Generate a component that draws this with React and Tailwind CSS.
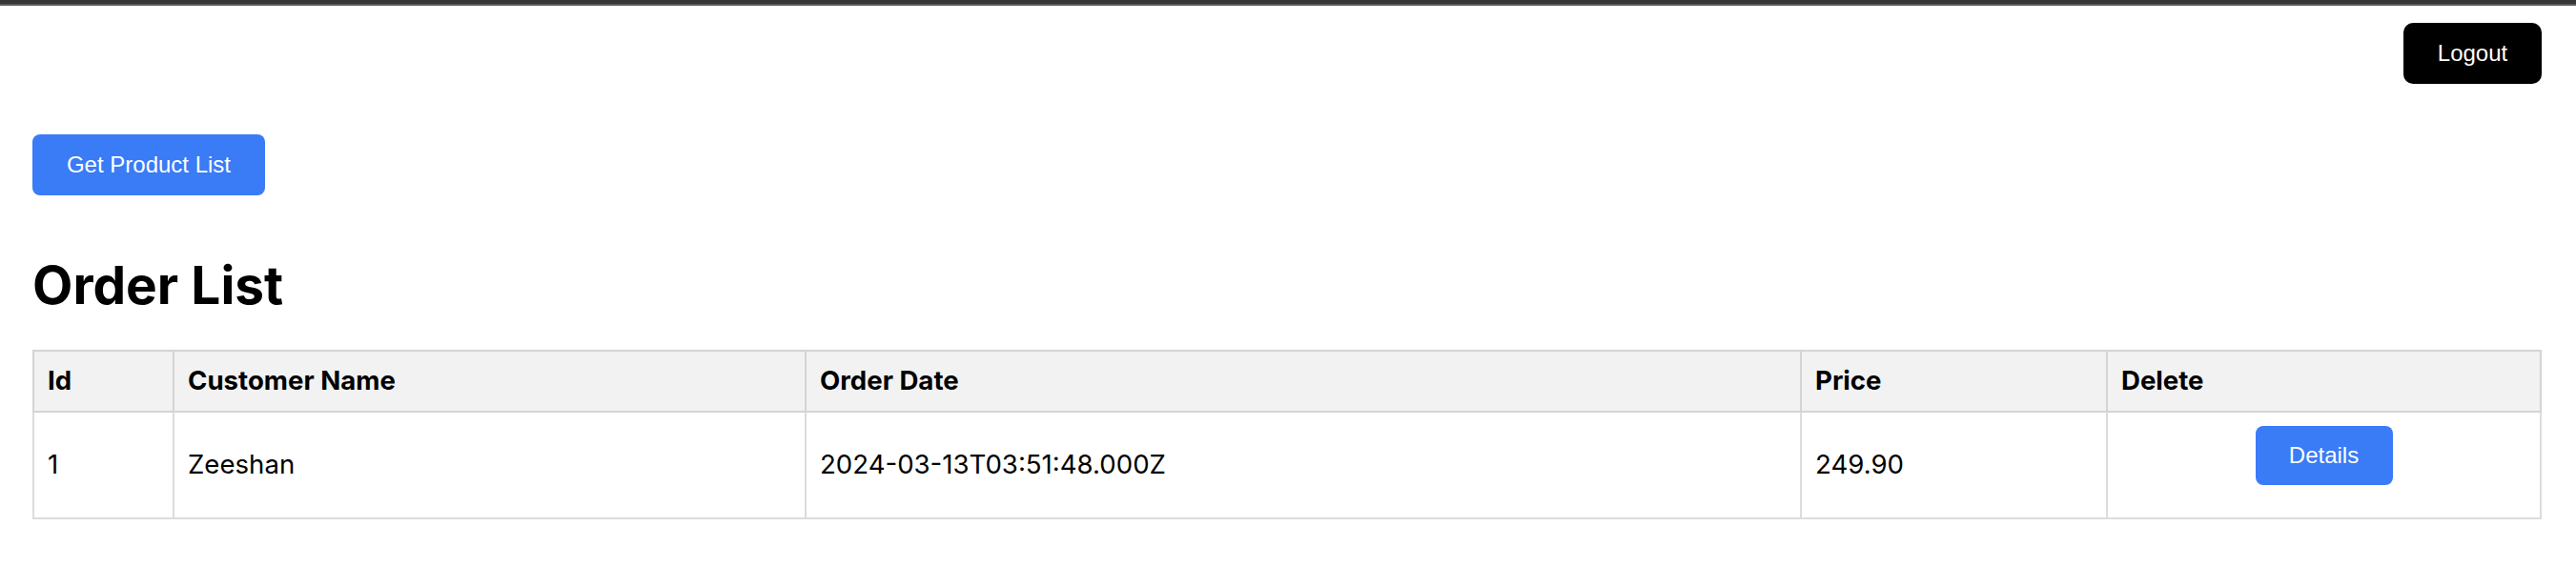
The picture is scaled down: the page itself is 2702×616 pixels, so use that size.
import React from 'react';

const orders = [
    { id: 1, customerName: 'Zeeshan', orderDate: '2024-03-13T03:51:48.000Z', price: '249.90' },
];

export default function App() {
    return (
        <div className="min-h-screen bg-white font-['Inter',sans-serif] text-black">
            {/* window edge */}
            <div className="h-[4px] bg-[#363636]" />
            <div className="h-[2px] bg-[#5a5a5a]" />

            <div className="pl-[34px] pr-[36px]">
                <div className="flex justify-end pt-[18px]">
                    <button className="h-[64px] w-[145px] rounded-[10px] bg-black font-['Liberation_Sans',Arial,sans-serif] text-[24px] text-white">
                        Logout
                    </button>
                </div>

                <div className="mt-[53px]">
                    <button className="h-[64px] w-[244px] rounded-[8px] bg-[#3a7bf6] font-['Liberation_Sans',Arial,sans-serif] text-[24px] text-white">
                        Get Product List
                    </button>
                </div>

                <h1 className="mt-[61px] text-[55px] font-bold leading-[66px]">Order List</h1>

                <table className="mt-[35px] w-full table-fixed border-collapse border-2 border-[#cfcfcf] text-[27.6px]">
                    <thead>
                        <tr className="h-[64px] bg-[#f2f2f2] text-left">
                            <th className="w-[147px] border-2 border-[#d4d4d4] px-[14px] font-bold">Id</th>
                            <th className="w-[663px] border-2 border-[#d4d4d4] px-[14px] font-bold">Customer Name</th>
                            <th className="w-[1044px] border-2 border-[#d4d4d4] px-[14px] font-bold">Order Date</th>
                            <th className="w-[321px] border-2 border-[#d4d4d4] px-[14px] font-bold">Price</th>
                            <th className="border-2 border-[#d4d4d4] px-[14px] font-bold">Delete</th>
                        </tr>
                    </thead>
                    <tbody>
                        {orders.map((order) => (
                            <tr key={order.id} className="h-[112px]">
                                <td className="border-2 border-[#dcdcdc] px-[14px]">{order.id}</td>
                                <td className="border-2 border-[#dcdcdc] px-[14px]">{order.customerName}</td>
                                <td className="border-2 border-[#dcdcdc] px-[14px]">{order.orderDate}</td>
                                <td className="border-2 border-[#dcdcdc] px-[14px]">{order.price}</td>
                                <td className="border-2 border-[#dcdcdc] px-[14px] align-middle">
                                    <div className="flex justify-center pb-[20px]">
                                        <button className="h-[62px] w-[144px] rounded-[8px] bg-[#3a7bf6] font-['Liberation_Sans',Arial,sans-serif] text-[24px] text-white">
                                            Details
                                        </button>
                                    </div>
                                </td>
                            </tr>
                        ))}
                    </tbody>
                </table>
            </div>
        </div>
    );
}
